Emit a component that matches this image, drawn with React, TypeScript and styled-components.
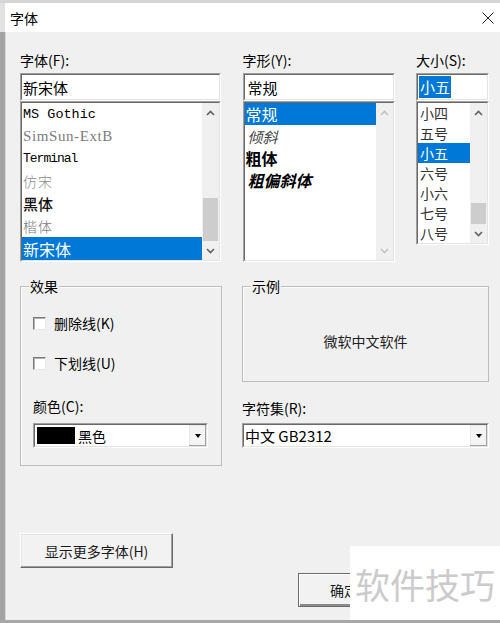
import React from "react";
import styled, { createGlobalStyle, css } from "styled-components";

const Global = createGlobalStyle`
  html, body { margin: 0; padding: 0; width: 500px; height: 623px; overflow: hidden; background: #f0f0f0; }
  #root { width: 500px; height: 623px; }
  * { box-sizing: border-box; }
`;

const UI = `"Noto Sans CJK SC", "Microsoft YaHei", sans-serif`;

const Window = styled.div`
  position: relative;
  width: 500px;
  height: 623px;
  display: flex;
  flex-direction: column;
  background: #f0f0f0;
  border-top: 3px solid #d6d6d6;
  border-bottom: 3px solid #a8a8a8;
  font-family: ${UI};
  font-size: 14px;
  color: #000;
  overflow: hidden;
`;

const TitleBar = styled.div`
  height: 29px;
  flex: none;
  display: flex;
  align-items: center;
  justify-content: space-between;
  background: #fff;
  border-left: 5px solid #e2e2e2;
  padding: 0 6px 0 5px;
`;

const Title = styled.span`
  font-size: 14px;
  line-height: 16px;
  color: #000;
`;

const Body = styled.div`
  flex: 1;
  display: flex;
  flex-direction: column;
  border-left: 5px solid #a3a3a3;
  box-shadow: inset 1px 0 0 #d8d8d8;
  padding: 20px 11px 0 15px;
`;

const TopRow = styled.div`
  display: grid;
  grid-template-columns: 201px 152px 73px;
  justify-content: space-between;
  align-items: start;
`;

const Column = styled.div`
  display: flex;
  flex-direction: column;
`;

const Label = styled.div<{ $mb?: number; $mt?: number }>`
  font-size: 14px;
  line-height: 16px;
  height: 16px;
  white-space: nowrap;
  margin-top: ${(p) => p.$mt ?? 0}px;
  margin-bottom: ${(p) => p.$mb ?? 5}px;
`;

const Well = styled.div<{ $h: number }>`
  height: ${(p) => p.$h}px;
  display: flex;
  border: 1px solid;
  border-color: #a0a0a0 #ffffff #ffffff #a0a0a0;
`;

const WellInner = styled.div`
  flex: 1;
  min-width: 0;
  display: flex;
  align-items: stretch;
  background: #fff;
  border: 1px solid;
  border-color: #696969 #e3e3e3 #e3e3e3 #696969;
`;

const FieldText = styled.div<{ $pl?: number }>`
  display: flex;
  align-items: center;
  padding-left: ${(p) => p.$pl ?? 1}px;
  font-size: 15px;
  white-space: nowrap;
`;

const SelText = styled.span`
  display: inline-block;
  height: 22px;
  line-height: 22px;
  padding: 0 1px;
  background: #0078d7;
  color: #fff;
`;

const Items = styled.div`
  flex: 1;
  min-width: 0;
  display: flex;
  flex-direction: column;
  overflow: hidden;
`;

const itemFonts = {
  gothic: css`font-family: "Liberation Mono", monospace; font-size: 13.5px; color: #000;`,
  extb: css`font-family: "Liberation Serif", serif; font-size: 15px; letter-spacing: 0.6px; color: #7c7c7c;`,
  terminal: css`font-family: "Liberation Mono", monospace; font-size: 13px; color: #000; letter-spacing: -1px;`,
  fangsong: css`font-family: ${UI}; font-size: 14px; letter-spacing: 1px; color: #8a8a8a; font-weight: 300;`,
  hei: css`font-family: ${UI}; font-size: 15px; color: #111; font-weight: 500;`,
  kai: css`font-family: ${UI}; font-size: 14px; letter-spacing: 1px; color: #7a7a7a; font-weight: 300;`,
  song: css`font-family: ${UI}; font-size: 16px; color: #000;`,
  regular: css`font-family: ${UI}; font-size: 16px; color: #000;`,
  italic: css`font-family: ${UI}; font-size: 15px; font-style: italic; color: #444; padding-left: 3px;`,
  bold: css`font-family: ${UI}; font-size: 16px; font-weight: 700; color: #000;`,
  bolditalic: css`font-family: ${UI}; font-size: 16px; font-weight: 700; font-style: italic; color: #000; padding-left: 3px;`,
  size: css`font-family: ${UI}; font-size: 14px; color: #333; padding-left: 2px;`,
};

type Variant = keyof typeof itemFonts;

const Item = styled.div<{ $h: number; $v: Variant; $sel?: boolean }>`
  flex: none;
  height: ${(p) => p.$h}px;
  display: flex;
  align-items: center;
  padding-left: 1px;
  white-space: nowrap;
  ${(p) => itemFonts[p.$v]}
  ${(p) =>
    p.$sel &&
    css`
      background: #0078d7;
      color: #fff;
    `}
`;

const ScrollBar = styled.div`
  width: 17px;
  flex: none;
  display: flex;
  flex-direction: column;
  background: #f0f0f0;
`;

const ArrowBtn = styled.div<{ $off?: boolean }>`
  height: 19px;
  flex: none;
  display: flex;
  align-items: center;
  justify-content: center;
  color: ${(p) => (p.$off ? "#c2c2c2" : "#606060")};
`;

const Track = styled.div`
  flex: 1;
  display: flex;
  flex-direction: column;
  justify-content: flex-end;
`;

const Thumb = styled.div<{ $h: number }>`
  height: ${(p) => p.$h}px;
  margin: 0 1px;
  background: #cdcdcd;
`;

const MidRow = styled.div`
  margin-top: 24px;
  display: grid;
  grid-template-columns: 202px 247px;
  justify-content: space-between;
  align-items: start;
`;

const Group = styled.div<{ $h: number }>`
  position: relative;
  height: ${(p) => p.$h}px;
  border: 1px solid #bdbdbd;
  box-shadow: inset 1px 1px 0 #fbfbfb;
`;

const Legend = styled.span`
  position: absolute;
  top: -9px;
  left: 8px;
  padding: 0 1px;
  background: #f0f0f0;
  font-size: 14px;
  line-height: 16px;
`;

const EffectsBody = styled.div`
  display: flex;
  flex-direction: column;
  padding: 28px 13px 0 12px;
`;

const CheckRow = styled.div<{ $mt?: number }>`
  display: flex;
  align-items: center;
  gap: 8px;
  height: 16px;
  margin-top: ${(p) => p.$mt ?? 0}px;
`;

const CheckBox = styled.span`
  width: 13px;
  height: 13px;
  flex: none;
  background: #fff;
  border: 1px solid;
  border-color: #7a7a7a #e8e8e8 #e8e8e8 #7a7a7a;
  box-shadow: inset 1px 1px 0 #b0b0b0;
`;

const CheckLabel = styled.span`
  font-size: 14px;
  line-height: 16px;
`;

const ComboText = styled.div<{ $fs?: number }>`
  flex: 1;
  display: flex;
  align-items: center;
  padding-left: 1px;
  font-size: ${(p) => p.$fs ?? 14}px;
  white-space: nowrap;
`;

const Swatch = styled.span`
  width: 38px;
  height: 17px;
  margin: 0 3px 0 1px;
  background: #000;
`;

const DropBtn = styled.div`
  width: 18px;
  flex: none;
  display: flex;
  align-items: center;
  justify-content: center;
  background: #f4f4f4;
  border-left: 1px solid #fff;
  box-shadow: inset -1px -1px 0 #a0a0a0, inset 1px 1px 0 #e8e8e8;
`;

const Triangle = styled.span`
  width: 0;
  height: 0;
  border-left: 3.5px solid transparent;
  border-right: 3.5px solid transparent;
  border-top: 4px solid #000;
`;

const RightCol = styled.div`
  display: flex;
  flex-direction: column;
`;

const SampleBody = styled.div`
  height: 100%;
  display: flex;
  align-items: center;
  justify-content: center;
  padding-top: 14px;
  font-size: 14px;
  color: #222;
`;

const ButtonRow = styled.div<{ $mt: number; $pr?: number; $end?: boolean }>`
  display: flex;
  margin-top: ${(p) => p.$mt}px;
  padding-right: ${(p) => p.$pr ?? 0}px;
  justify-content: ${(p) => (p.$end ? "flex-end" : "flex-start")};
`;

const Button = styled.button<{ $w: number; $h: number; $default?: boolean }>`
  width: ${(p) => p.$w}px;
  height: ${(p) => p.$h}px;
  padding: 0;
  font-family: ${UI};
  font-size: 14px;
  color: #1a1a1a;
  background: #f2f2f2;
  border: 1px solid;
  border-color: #ffffff #696969 #696969 #ffffff;
  box-shadow: inset -1px -1px 0 #a0a0a0, inset 1px 1px 0 #e3e3e3;
  ${(p) =>
    p.$default &&
    css`
      border-color: #6a6a6a;
      box-shadow: inset 1px 1px 0 #ffffff, inset -2px -2px 0 #8a8a8a;
    `}
`;

const Watermark = styled.div`
  position: absolute;
  right: 0;
  bottom: 0;
  width: 150px;
  height: 74px;
  background: #fff;
  display: flex;
  align-items: center;
  justify-content: center;
  font-family: ${UI};
  font-size: 35px;
  color: #cbcbcb;
`;

const Chevron = ({ up }: { up?: boolean }) => (
  <svg width="9" height="6" viewBox="0 0 9 6">
    <path
      d={up ? "M1 5 L4.5 1.5 L8 5" : "M1 1 L4.5 4.5 L8 1"}
      fill="none"
      stroke="currentColor"
      strokeWidth="1.6"
    />
  </svg>
);

const CloseIcon = () => (
  <svg width="12" height="12" viewBox="0 0 12 12">
    <path d="M0.5 0.5 L11.5 11.5 M11.5 0.5 L0.5 11.5" stroke="#222" strokeWidth="1" />
  </svg>
);

type Row = { t: string; v: Variant; sel?: boolean };

const fontRows: Row[] = [
  { t: "MS Gothic", v: "gothic" },
  { t: "SimSun-ExtB", v: "extb" },
  { t: "Terminal", v: "terminal" },
  { t: "仿宋", v: "fangsong" },
  { t: "黑体", v: "hei" },
  { t: "楷体", v: "kai" },
  { t: "新宋体", v: "song", sel: true },
];

const styleRows: Row[] = [
  { t: "常规", v: "regular", sel: true },
  { t: "倾斜", v: "italic" },
  { t: "粗体", v: "bold" },
  { t: "粗偏斜体", v: "bolditalic" },
];

const sizeRows: Row[] = ["小四", "五号", "小五", "六号", "小六", "七号", "八号"].map((t) => ({
  t,
  v: "size" as Variant,
  sel: t === "小五",
}));

const ListBox = ({
  rows,
  rowH,
  h,
  thumb,
  disabled,
}: {
  rows: Row[];
  rowH: number;
  h: number;
  thumb?: number;
  disabled?: boolean;
}) => (
  <Well $h={h}>
    <WellInner>
      <Items>
        {rows.map((r) => (
          <Item key={r.t} $h={rowH} $v={r.v} $sel={r.sel}>
            {r.t}
          </Item>
        ))}
      </Items>
      <ScrollBar>
        <ArrowBtn $off={disabled}>
          <Chevron up />
        </ArrowBtn>
        <Track>{thumb ? <Thumb $h={thumb} /> : null}</Track>
        <ArrowBtn $off={disabled}>
          <Chevron />
        </ArrowBtn>
      </ScrollBar>
    </WellInner>
  </Well>
);

export default function App() {
  return (
    <>
      <Global />
      <Window>
        <TitleBar>
          <Title>字体</Title>
          <CloseIcon />
        </TitleBar>
        <Body>
          <TopRow>
            <Column>
              <Label>字体(F):</Label>
              <Well $h={28}>
                <WellInner>
                  <FieldText>新宋体</FieldText>
                </WellInner>
              </Well>
              <ListBox rows={fontRows} rowH={22.4} h={161} thumb={43} />
            </Column>
            <Column>
              <Label>字形(Y):</Label>
              <Well $h={28}>
                <WellInner>
                  <FieldText $pl={3}>常规</FieldText>
                </WellInner>
              </Well>
              <ListBox rows={styleRows} rowH={22} h={161} disabled />
            </Column>
            <Column>
              <Label>大小(S):</Label>
              <Well $h={28}>
                <WellInner>
                  <FieldText>
                    <SelText>小五</SelText>
                  </FieldText>
                </WellInner>
              </Well>
              <ListBox rows={sizeRows} rowH={20} h={144} thumb={21} />
            </Column>
          </TopRow>

          <MidRow>
            <Group $h={180}>
              <Legend>效果</Legend>
              <EffectsBody>
                <CheckRow>
                  <CheckBox />
                  <CheckLabel>删除线(K)</CheckLabel>
                </CheckRow>
                <CheckRow $mt={24}>
                  <CheckBox />
                  <CheckLabel>下划线(U)</CheckLabel>
                </CheckRow>
                <Label $mt={27} $mb={9}>
                  颜色(C):
                </Label>
                <Well $h={25}>
                  <WellInner>
                    <ComboText>
                      <Swatch />
                      黑色
                    </ComboText>
                    <DropBtn>
                      <Triangle />
                    </DropBtn>
                  </WellInner>
                </Well>
              </EffectsBody>
            </Group>

            <RightCol>
              <Group $h={96}>
                <Legend>示例</Legend>
                <SampleBody>微软中文软件</SampleBody>
              </Group>
              <Label $mt={18} $mb={7}>
                字符集(R):
              </Label>
              <Well $h={25}>
                <WellInner>
                  <ComboText $fs={15}>中文 GB2312</ComboText>
                  <DropBtn>
                    <Triangle />
                  </DropBtn>
                </WellInner>
              </Well>
            </RightCol>
          </MidRow>

          <ButtonRow $mt={67}>
            <Button $w={153} $h={35}>
              显示更多字体(H)
            </Button>
          </ButtonRow>
          <ButtonRow $mt={5} $pr={99} $end>
            <Button $w={92} $h={34} $default>
              确定
            </Button>
          </ButtonRow>
        </Body>
        <Watermark>软件技巧</Watermark>
      </Window>
    </>
  );
}
